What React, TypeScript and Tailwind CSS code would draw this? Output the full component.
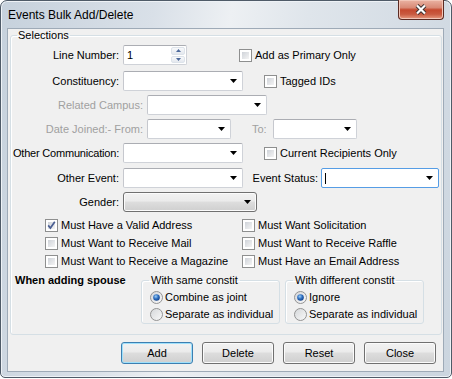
import clsx from "clsx";

function Checkbox({ checked = false }: { checked?: boolean }) {
	return (
		<span className="relative flex h-[13px] w-[13px] shrink-0 border border-[#8e8f8f] bg-white p-[2px]">
			<span className="flex-1 bg-[linear-gradient(135deg,#cfd3d9,#f4f4f4)]" />
			{checked && (
				<svg className="absolute inset-0" viewBox="0 0 11 11">
					<path
						d="M2.2 5.4 L4.4 8 L8.8 1.8"
						fill="none"
						stroke="#4b5f93"
						strokeWidth="1.7"
					/>
				</svg>
			)}
		</span>
	);
}

function Radio({ checked = false }: { checked?: boolean }) {
	return (
		<svg className="h-[13px] w-[13px] shrink-0" viewBox="0 0 13 13">
			<defs>
				<linearGradient id="rb" x1="0" y1="0" x2="1" y2="1">
					<stop offset="0" stopColor="#d4d6d9" />
					<stop offset="1" stopColor="#fafafa" />
				</linearGradient>
				<radialGradient id="rd" cx="0.4" cy="0.35" r="0.7">
					<stop offset="0" stopColor="#9fd0f5" />
					<stop offset="0.5" stopColor="#2f70c2" />
					<stop offset="1" stopColor="#123f85" />
				</radialGradient>
			</defs>
			<circle cx="6.5" cy="6.5" r="6" fill="url(#rb)" stroke="#939393" />
			{checked && <circle cx="6.5" cy="6.5" r="3.3" fill="url(#rd)" />}
		</svg>
	);
}

function Arrow() {
	return (
		<svg className="h-[4px] w-[7px]" viewBox="0 0 7 4">
			<polygon points="0,0 7,0 3.5,4" fill="#000" />
		</svg>
	);
}

function Combo({
	className,
	focused = false,
}: {
	className: string;
	focused?: boolean;
}) {
	return (
		<div
			className={clsx(
				"flex h-[20px] items-center rounded-[2px] border bg-white pr-[5px] pl-[3px]",
				focused
					? "border-[#569de5]"
					: "border-[#cfd2d8] border-t-[#abadb3] border-l-[#c6c8ce]",
				className
			)}
		>
			{focused && <span className="h-[11px] w-px bg-black" />}
			<span className="ml-auto">
				<Arrow />
			</span>
		</div>
	);
}

function Button({
	label,
	primary = false,
}: {
	label: string;
	primary?: boolean;
}) {
	return (
		<button
			className={clsx(
				"h-[22px] w-[72px] rounded-[3px] border bg-[linear-gradient(#f2f2f2,#ebebeb_45%,#dddddd_50%,#cfcfcf)] leading-[20px]",
				primary
					? "border-[#3c7fb1] shadow-[inset_0_0_0_1px_#9fe0fb]"
					: "border-[#707070] shadow-[inset_0_0_0_1px_#fbfbfb]"
			)}
		>
			{label}
		</button>
	);
}

export default function App() {
	return (
		<div className="h-[379px] w-[452px] bg-white font-['Liberation_Sans',Arial,sans-serif] text-[11px] leading-[13px] text-black">
			<div className="flex h-[378px] flex-col rounded-t-[7px] rounded-b-[5px] border border-[#4f5b68] bg-[linear-gradient(100deg,#c6d1dc,#d9e0e8_30%,#edf0f3_45%,#dfe5eb_60%,#cbd5df)] pr-[7px] pl-[6px] shadow-[inset_0_0_0_1px_#eef2f6]">
				{/* title bar */}
				<div className="flex h-[27px] shrink-0 items-start justify-between">
					<span className="ml-[1px] self-center pt-[2px] text-[12px] leading-[15px]">
						Events Bulk Add/Delete
					</span>
					<div className="-mt-px flex h-[20px] w-[46px] items-center justify-center rounded-b-[4px] border border-t-0 border-[#5b2a22] bg-[linear-gradient(#eab3a3,#d98a76_40%,#c5492f_52%,#c95a40_75%,#e79a80)] shadow-[inset_0_0_0_1px_#f2c6b8]">
						<svg className="h-[11px] w-[12px]" viewBox="0 0 12 11">
							<path
								d="M2 1.5 L10 9.5 M10 1.5 L2 9.5"
								stroke="#3b3030"
								strokeWidth="4"
							/>
							<path
								d="M2 1.5 L10 9.5 M10 1.5 L2 9.5"
								stroke="#fff"
								strokeWidth="2.2"
							/>
						</svg>
					</div>
				</div>

				{/* client area */}
				<div className="h-[344px] shrink-0 border border-[#9eaab7] bg-[#f0f0f0]">
					<fieldset className="ml-[2px] h-[306px] w-[432px] rounded-[3px] border border-[#d5dfe5] shadow-[inset_1px_1px_0_#fff]">
						<legend className="ml-[6px] px-[1px] leading-[13px]">Selections</legend>
						<div className="flex flex-col">
							<div className="mt-[3px] flex h-[20px] items-center">
								<span className="w-[108px] text-right whitespace-nowrap">Line Number:</span>
								<div className="ml-[4px] flex h-[20px] w-[64px] rounded-[2px] border border-[#cfd2d8] border-t-[#abadb3] border-l-[#c6c8ce] bg-white">
									<span className="flex-1 pl-[3px] leading-[18px]">1</span>
									<div className="flex w-[16px] flex-col gap-px p-px">
										<span className="flex flex-1 items-center justify-center rounded-[2px] border border-[#dde3ea] bg-[linear-gradient(#f8f9fb,#e4e8ee)]">
											<svg className="h-[3px] w-[5px]" viewBox="0 0 5 3">
												<polygon points="0,3 5,3 2.5,0" fill="#4d6a9c" />
											</svg>
										</span>
										<span className="flex flex-1 items-center justify-center rounded-[2px] border border-[#dde3ea] bg-[linear-gradient(#f8f9fb,#e4e8ee)]">
											<svg className="h-[3px] w-[5px]" viewBox="0 0 5 3">
												<polygon points="0,0 5,0 2.5,3" fill="#4d6a9c" />
											</svg>
										</span>
									</div>
								</div>
								<span className="ml-[52px] flex items-center gap-[3px] whitespace-nowrap">
									<Checkbox />
									Add as Primary Only
								</span>
							</div>

							<div className="mt-[6px] flex h-[20px] items-center">
								<span className="w-[108px] text-right whitespace-nowrap">Constituency:</span>
								<Combo className="ml-[4px] w-[120px]" />
								<span className="ml-[21px] flex items-center gap-[3px] whitespace-nowrap">
									<Checkbox />
									Tagged IDs
								</span>
							</div>

							<div className="mt-[4px] flex h-[20px] items-center text-[#a0a0a0]">
								<span className="w-[132px] text-right whitespace-nowrap">Related Campus:</span>
								<Combo className="ml-[4px] w-[120px]" />
							</div>

							<div className="mt-[4px] flex h-[20px] items-center text-[#a0a0a0]">
								<span className="w-[132px] text-right whitespace-nowrap">Date Joined:- From:</span>
								<Combo className="ml-[4px] w-[84px]" />
								<span className="ml-[21px]">To:</span>
								<Combo className="ml-[6px] w-[84px]" />
							</div>

							<div className="mt-[4px] flex h-[20px] items-center">
								<span className="flex w-[108px] justify-end tracking-[-0.2px] whitespace-nowrap">
									Other Communication:
								</span>
								<Combo className="ml-[4px] w-[120px]" />
								<span className="ml-[21px] flex items-center gap-[3px] whitespace-nowrap">
									<Checkbox />
									Current Recipients Only
								</span>
							</div>

							<div className="mt-[5px] flex h-[20px] items-center">
								<span className="w-[108px] text-right whitespace-nowrap">Other Event:</span>
								<Combo className="ml-[4px] w-[120px]" />
								<span className="w-[78px] pr-[3px] text-right whitespace-nowrap">Event Status:</span>
								<Combo className="w-[118px]" focused />
							</div>

							<div className="mt-[4px] flex h-[20px] items-center">
								<span className="w-[108px] text-right whitespace-nowrap">Gender:</span>
								<div className="ml-[4px] flex h-[20px] w-[134px] items-center justify-end rounded-[3px] border border-[#707070] bg-[linear-gradient(#f2f2f2,#ebebeb_45%,#dddddd_50%,#cfcfcf)] pr-[5px] shadow-[inset_0_0_0_1px_#fbfbfb]">
									<Arrow />
								</div>
							</div>

							<div className="mt-[4px] grid grid-cols-[197px_auto] pl-[34px]">
								{[
									["Must Have a Valid Address", true],
									["Must Want Solicitation", false],
									["Must Want to Receive Mail", false],
									["Must Want to Receive Raffle", false],
									["Must Want to Receive a Magazine", false],
									["Must Have an Email Address", false],
								].map(([label, checked]) => (
									<span
										key={label as string}
										className="flex h-[18px] items-center gap-[3px] whitespace-nowrap"
									>
										<Checkbox checked={checked as boolean} />
										{label}
									</span>
								))}
							</div>

							<div className="mt-[4px] flex">
								<span className="w-[130px] pl-[4px] font-bold whitespace-nowrap">
									When adding spouse
								</span>
								<div className="flex gap-[5px]">
									{[
										["With same constit", "Combine as joint"],
										["With different constit", "Ignore"],
									].map(([title, first]) => (
										<fieldset
											key={title}
											className="h-[50px] w-[139px] rounded-[3px] border border-[#d5dfe5] shadow-[inset_1px_1px_0_#fff]"
										>
											<legend className="ml-[7px] px-[2px] leading-[13px] whitespace-nowrap">
												{title}
											</legend>
											<div className="mt-[2px] flex flex-col pl-[8px]">
												<span className="flex h-[17px] items-center gap-[2px] whitespace-nowrap">
													<Radio checked />
													{first}
												</span>
												<span className="flex h-[17px] items-center gap-[2px] whitespace-nowrap">
													<Radio />
													Separate as individual
												</span>
											</div>
										</fieldset>
									))}
								</div>
							</div>
						</div>
					</fieldset>

					<div className="mt-[7px] flex gap-[9px] pl-[113px]">
						<Button label="Add" primary />
						<Button label="Delete" />
						<Button label="Reset" />
						<Button label="Close" />
					</div>
				</div>
			</div>
		</div>
	);
}
